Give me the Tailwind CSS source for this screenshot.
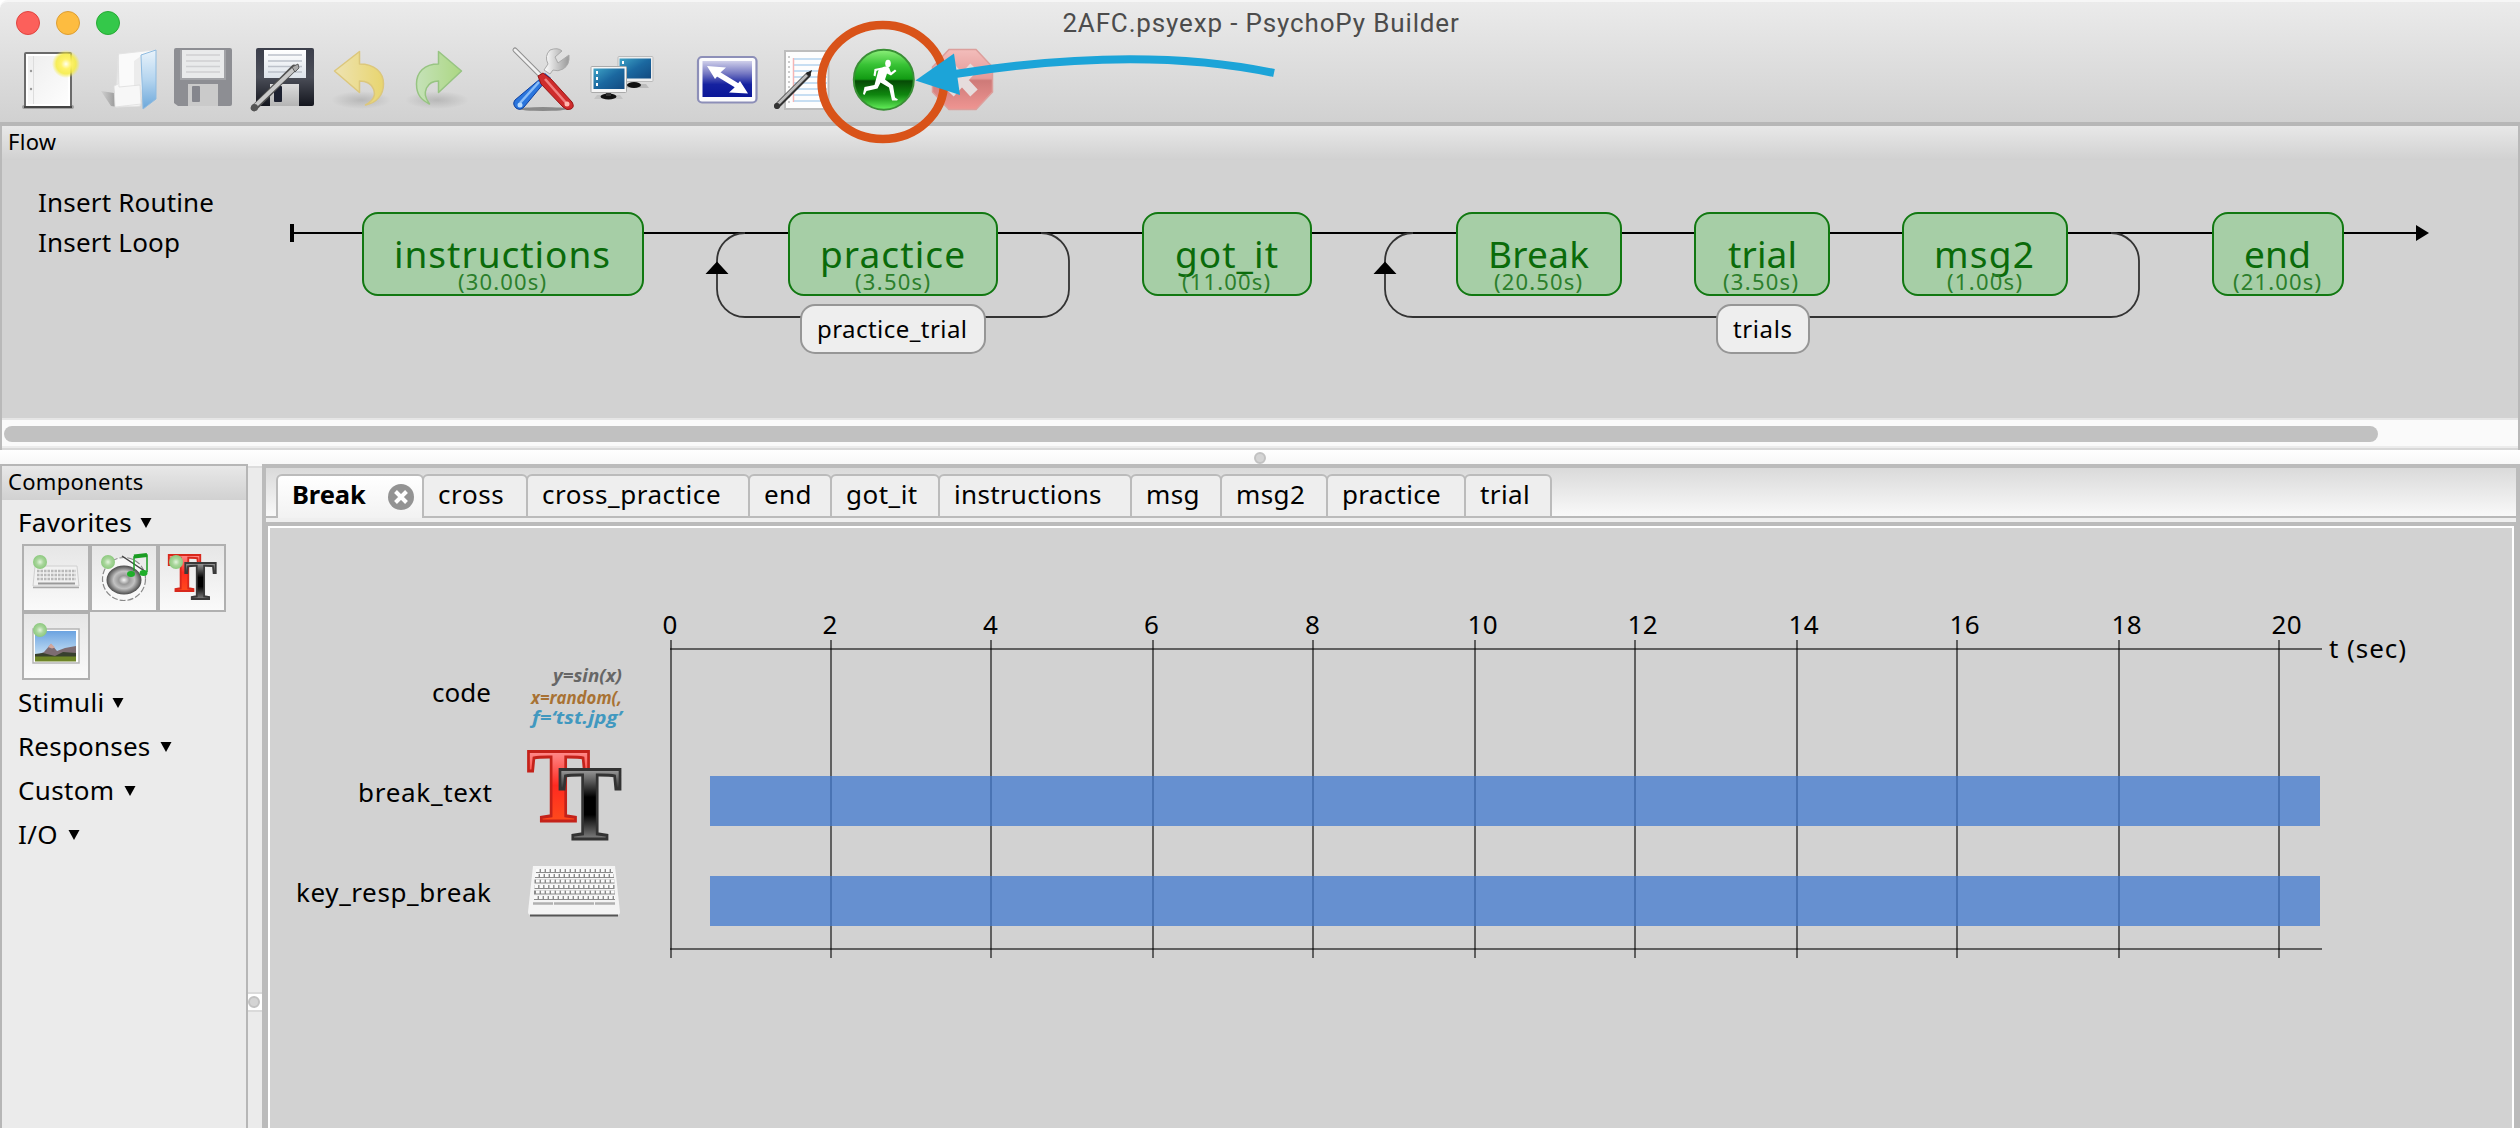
<!DOCTYPE html>
<html lang="en">
<head>
<meta charset="utf-8">
<title>2AFC.psyexp - PsychoPy Builder</title>
<script src="https://cdn.jsdelivr.net/npm/@tailwindcss/browser@4"></script>
</head>
<body class="w-[2520px] h-[1128px] overflow-hidden bg-white">
<div class="relative flex flex-col w-[2520px] h-[1128px] font-['Noto_Sans',sans-serif] text-black">

  <!-- Title bar and toolbar -->
  <header class="h-[126px] shrink-0 flex flex-col rounded-tl-lg border-t-2 border-t-[#f6f6f6] border-b-4 border-b-[#b7b7b7] bg-linear-to-b from-[#ebebeb] to-[#d1d1d1]">
    <div class="h-[42px] flex items-center">
      <div class="w-[300px] pl-4 flex gap-4">
        <span class="size-6 rounded-full bg-[#fc605b] border border-[#e0443f]"></span>
        <span class="size-6 rounded-full bg-[#fdbc40] border border-[#dd9e33]"></span>
        <span class="size-6 rounded-full bg-[#34c84a] border border-[#27aa35]"></span>
      </div>
      <h1 class="flex-1 pl-[2px] pb-[1px] text-center font-['Roboto',sans-serif] text-[26px] leading-[36px] tracking-[0.85px] text-[#4c4c4c]">2AFC.psyexp - PsychoPy Builder</h1>
      <div class="w-[300px]"></div>
    </div>
    <div class="flex h-[72px] pl-5">
      <!-- New -->
      <svg class="w-[70px] h-[72px]" viewBox="20 44 70 72">
        <defs>
          <radialGradient id="sun"><stop offset="0" stop-color="#fffff0"/><stop offset=".35" stop-color="#fff36b"/><stop offset=".7" stop-color="#f6ec40" stop-opacity=".85"/><stop offset="1" stop-color="#f6ec40" stop-opacity="0"/></radialGradient>
          <linearGradient id="page" x1="0" y1="0" x2="1" y2="1"><stop offset="0" stop-color="#eee"/><stop offset="1" stop-color="#fdfdfd"/></linearGradient>
        </defs>
        <rect x="22" y="105" width="52" height="4" rx="2" fill="#000" opacity=".25"/>
        <rect x="25" y="53" width="46" height="54" rx="1" fill="#fff" stroke="#6a6a6a" stroke-width="2"/>
        <rect x="28" y="56" width="40" height="48" fill="url(#page)"/>
        <path d="M33.500 56v48" stroke="#ddd" stroke-width="1"/>
        <circle cx="31" cy="71" r="1.200" fill="#999"/><circle cx="31" cy="89" r="1.200" fill="#999"/>
        <path d="M24 107h48" stroke="#444" stroke-width="2"/>
        <circle cx="66" cy="64" r="14" fill="url(#sun)"/>
      </svg>
      <!-- Open -->
      <svg class="w-[75px] h-[72px]" viewBox="90 44 75 72">
        <defs>
          <linearGradient id="fold" x1="0" y1="0" x2="0" y2="1"><stop offset="0" stop-color="#e9f3fb"/><stop offset=".5" stop-color="#b5d5ef"/><stop offset="1" stop-color="#6ba7da"/></linearGradient>
          <linearGradient id="fsh" x1="0" x2="1"><stop offset="0" stop-color="#888" stop-opacity=".1"/><stop offset="1" stop-color="#777" stop-opacity=".75"/></linearGradient>
        </defs>
        <path d="M101 91l13 2v-5l4 19-7-1z" fill="url(#fsh)"/>
        <path d="M118 54l36-4-12 40-2 16-24 1z" fill="#fafafa" stroke="#e4e4e4"/>
        <path d="M134 61l7-5v40l-7-5z" fill="#ececec"/>
        <path d="M114 86l4-2v-30l1 33 21-2 1 19-26 3z" fill="#f7f7f7" stroke="#ddd" stroke-width=".8"/>
        <path d="M141 55l15-5v49l-13 10z" fill="url(#fold)" stroke="#8fbbe0"/>
      </svg>
      <!-- Save -->
      <svg class="w-[77px] h-[72px]" viewBox="165 44 77 72">
        <defs><linearGradient id="lab" x1="0" y1="0" x2="0" y2="1"><stop offset="0" stop-color="#fff"/><stop offset="1" stop-color="#dde3ea"/></linearGradient>
        <linearGradient id="shut" x1="0" y1="0" x2="0" y2="1"><stop offset="0" stop-color="#dcdcdc"/><stop offset="1" stop-color="#b4b4b4"/></linearGradient></defs>
        <path d="M176 48h54q2 0 2 2v54q0 2-2 2h-52l-4-3V50q0-2 2-2z" fill="#8d8e93"/>
        <path d="M180 50v30h46V50" fill="#a2a3a7"/>
        <rect x="182" y="50" width="42" height="28" fill="#e9eaeb"/>
        <path d="M186 55h34M186 61h34M186 66.500h34M186 72h34" stroke="#cfd0d2" stroke-width="1.500"/>
        <rect x="188" y="84" width="30" height="22" fill="#cacaca"/>
        <rect x="192" y="86" width="8" height="16" rx="1" fill="#85868d"/>
      </svg>
      <!-- Save as -->
      <svg class="w-[83px] h-[72px]" viewBox="242 44 83 72">
        <defs><linearGradient id="dk" x1="0" y1="0" x2="0" y2="1"><stop offset="0" stop-color="#3b3e4a"/><stop offset=".5" stop-color="#4b4e58"/><stop offset="1" stop-color="#14161e"/></linearGradient></defs>
        <path d="M258 48h54q2 0 2 2v54q0 2-2 2h-53l-3-3V50q0-2 2-2z" fill="url(#dk)"/>
        <rect x="264" y="50" width="42" height="28" fill="url(#lab)"/>
        <path d="M268 55h34M268 61h34M268 66.500h34M268 72h34" stroke="#bcc1ca" stroke-width="1.500"/>
        <rect x="270" y="84" width="29" height="22" fill="url(#shut)"/>
        <rect x="274" y="86" width="8" height="16" rx="1" fill="#1d2130"/>
        <path d="M254 108L294 68" stroke="#4f4f4f" stroke-width="6.500" stroke-linecap="round"/>
        <path d="M255 106L296 67" stroke="#c9c9c9" stroke-width="4"/>
        <path d="M292 67l6-3 1 4-4 4z" fill="#aaa" stroke="#444" stroke-width=".8"/>
        <circle cx="254.500" cy="107.500" r="3.500" fill="#555"/>
      </svg>
      <!-- Undo -->
      <svg class="w-[75px] h-[72px]" viewBox="325 44 75 72">
        <defs><linearGradient id="un" x1="0" x2="1"><stop offset="0" stop-color="#eee3b2"/><stop offset="1" stop-color="#e8d56f"/></linearGradient>
        <radialGradient id="sh"><stop offset="0" stop-color="#000" stop-opacity=".14"/><stop offset="1" stop-color="#000" stop-opacity="0"/></radialGradient></defs>
        <ellipse cx="361" cy="100" rx="30" ry="9" fill="url(#sh)"/>
        <path d="M334.500 71L359.500 51.500V64c15 0 24 8 24 20 0 11-7 19-18 21 9-5 10-11 8-16-2-5-6-8-14-8v11.500z" fill="url(#un)" stroke="#dcc77c" stroke-width="1.500" stroke-linejoin="round"/>
      </svg>
      <!-- Redo -->
      <svg class="w-[90px] h-[72px]" viewBox="400 44 90 72">
        <defs><linearGradient id="re" x1="0" x2="1"><stop offset="0" stop-color="#c5e2b8"/><stop offset="1" stop-color="#acd783"/></linearGradient></defs>
        <ellipse cx="437" cy="100" rx="32" ry="9" fill="url(#sh)"/>
        <path d="M461.500 71L438.500 51.500V64c-14 0-22 8-22 20 0 11 5 16 13 20-5-7-5-11-3-16 2-4 6-7 12-7v11.500z" fill="url(#re)" stroke="#97c482" stroke-width="1.500" stroke-linejoin="round"/>
      </svg>
      <!-- Preferences -->
      <svg class="w-[92px] h-[72px]" viewBox="490 44 92 72">
        <defs><linearGradient id="st" x1="0" x2="1"><stop offset="0" stop-color="#fff"/><stop offset="1" stop-color="#999"/></linearGradient></defs>
        <ellipse cx="543" cy="109" rx="24" ry="2" fill="#000" opacity=".35"/>
        <path d="M550 50q8-3 12 1l-7 6 3 6 11-8q1 10-6 14-5 3-10 1l-3 4-6-4 4-6q-4-8 2-14z" fill="url(#st)" stroke="#aaa"/>
        <path d="M545 73l6 5-5 4-7-4z" fill="#1a56c2"/>
        <path d="M540 79l4 4-20 24q-4 4-8 1-4-4-1-8z" fill="#2a75dd" stroke="#0c3f9f"/>
        <path d="M539 82L520 103" stroke="#8abdf7" stroke-width="2.500"/><circle cx="520" cy="105" r="2.500" fill="#b8dcff"/>
        <path d="M515 50L542 77" stroke="#8f8f8f" stroke-width="5" stroke-linecap="round"/>
        <path d="M515 50L542 77" stroke="#f0f0f0" stroke-width="3" stroke-linecap="round"/>
        <path d="M538 76l5-3 8 6 21 23q3 5-1 7-4 2-8-2L541 84z" fill="#cf2c2c" stroke="#961414"/>
        <path d="M545 79L567 104" stroke="#f08080" stroke-width="2.500"/><circle cx="567" cy="104" r="2.500" fill="#ffb9b0"/>
      </svg>
      <!-- Monitor center -->
      <svg class="w-[98px] h-[72px]" viewBox="582 44 98 72">
        <defs><linearGradient id="scr" x1="0" y1="0" x2="1" y2="1"><stop offset="0" stop-color="#3fa3c6"/><stop offset=".5" stop-color="#1b68a0"/><stop offset="1" stop-color="#134a80"/></linearGradient></defs>
        <path d="M624 84h22l3 4h-28z" fill="#bbb"/><ellipse cx="634" cy="85" rx="7" ry="3" fill="#111"/>
        <rect x="618" y="56.500" width="35" height="25" rx="1" fill="#eee" stroke="#bbb"/>
        <rect x="619.500" y="58.500" width="31.500" height="20" fill="url(#scr)"/>
        <path d="M623 61v3M623 67v3" stroke="#fff" stroke-width="2"/>
        <path d="M597 95h23l3 4h-29z" fill="#c4c4c4"/><ellipse cx="608.500" cy="96.500" rx="8" ry="3" fill="#111"/>
        <path d="M606 90h5v6h-5z" fill="#333"/>
        <rect x="591" y="66.500" width="35.500" height="26" rx="1" fill="#f5f5f5" stroke="#aaa"/>
        <rect x="593.500" y="68.500" width="31" height="20.500" fill="url(#scr)"/>
        <path d="M597 71v3M597 77v3M597 83v3" stroke="#fff" stroke-width="2"/>
      </svg>
      <!-- Units / screen -->
      <svg class="w-[88px] h-[72px]" viewBox="680 44 88 72">
        <defs><linearGradient id="bl" x1="0" y1="0" x2="0" y2="1"><stop offset="0" stop-color="#cfcfea"/><stop offset=".35" stop-color="#7477c2"/><stop offset=".65" stop-color="#1522a0"/><stop offset="1" stop-color="#0a1698"/></linearGradient></defs>
        <rect x="698" y="57" width="58.500" height="45.500" rx="4" fill="#fbfbfd" stroke="#8d8fb8" stroke-width="2.200"/>
        <rect x="702.500" y="61" width="49.500" height="36" fill="url(#bl)"/>
        <path d="M714 71.500L741 88" stroke="#fff" stroke-width="5.500"/>
        <path d="M707 66l19 1.500-5 4.500-6 7zM748 93.500l-19-1 5-4.500 6-7z" fill="#fff"/>
      </svg>
      <!-- Compile script -->
      <svg class="w-[77px] h-[72px]" viewBox="768 44 77 72">
        <rect x="785" y="51" width="43.500" height="58" fill="#fdfdfd" stroke="#bdbdbd" stroke-width="2"/>
        <path d="M793.500 58v44" stroke="#f5b5b5" stroke-width="1.500"/>
        <path d="M794 59h33M794 65h33M794 71h33M794 77h33M794 83h33M794 89h33M794 95h33M794 101h33" stroke="#b5d3ee" stroke-width="1.600"/>
        <path d="M789 56v50" stroke="#ccc" stroke-width="2" stroke-dasharray="2 3"/>
        <path d="M777 106L808 75" stroke="#333" stroke-width="5.500" stroke-linecap="round"/>
        <path d="M778 104L807 75" stroke="#bbb" stroke-width="2.800"/>
        <path d="M806 73l6-3-2 6z" fill="#222"/><circle cx="777" cy="106" r="3" fill="#333"/>
      </svg>
      <!-- Run -->
      <svg class="w-[80px] h-[72px]" viewBox="845 44 80 72">
        <defs><linearGradient id="gr" x1="0" y1="0" x2="0" y2="1"><stop offset="0" stop-color="#8df07a"/><stop offset=".25" stop-color="#38c335"/><stop offset=".49" stop-color="#129b13"/><stop offset=".52" stop-color="#064a06"/><stop offset=".75" stop-color="#0f860f"/><stop offset="1" stop-color="#66f25c"/></linearGradient></defs>
        <circle cx="883.800" cy="79.700" r="30" fill="url(#gr)" stroke="#3a8f36" stroke-width="2"/>
        <ellipse cx="888" cy="63.500" rx="2.800" ry="3.800" fill="#fff"/>
        <path d="M882 67.500q4-2 7 0l2 5 4-3 1.500 1.500-5.500 4.500-4-2-2 6 8 6 2 12 3 2-1 1h-5l-3-13-8.500-5-3 6-11 2.500-2 4-1.500-1 1.500-7 10-2 4-15-2 1-1 5.500-2-1 1-6.500z" fill="#fff"/>
      </svg>
      <!-- Stop -->
      <svg class="w-[80px] h-[72px]" viewBox="925 44 80 72">
        <defs><linearGradient id="rd" x1="0" y1="0" x2="0" y2="1"><stop offset="0" stop-color="#f3bdbb"/><stop offset=".48" stop-color="#e59a98"/><stop offset=".52" stop-color="#ce7a78"/><stop offset="1" stop-color="#ef9592"/></linearGradient></defs>
        <path d="M949 49.500h27l16.500 17.500v25L976 109.500h-27L932.500 92V67z" fill="url(#rd)" stroke="#dc9f9c" stroke-width="1.500"/>
        <path d="M950 67l24 26M974 67l-24 26" stroke="#e6dcdc" stroke-width="10"/>
      </svg>
    </div>
  </header>

  <!-- Flow panel -->
  <section class="h-[324px] shrink-0 flex flex-col border-x-2 border-[#b9b9b9] bg-[#d2d2d2]">
    <h2 class="h-[34px] pl-[6px] pb-[3px] text-[22px] leading-[31px] tracking-[0.3px] bg-linear-to-b from-[#e8e8e8] to-[#d1d1d1]">Flow</h2>
    <svg class="h-[258px] w-[2516px] block" viewBox="2 160 2516 258" font-family="'Noto Sans',sans-serif">
      <g font-size="26" fill="#000">
        <text x="38" y="212" textLength="176">Insert Routine</text>
        <text x="38" y="252" textLength="142">Insert Loop</text>
      </g>
      <path d="M292 224v18" stroke="#000" stroke-width="4"/>
      <path d="M292 233H2418" stroke="#000" stroke-width="2"/>
      <path d="M2416 225l13 8-13 8z"/>
      <g fill="none" stroke="#333" stroke-width="1.800">
        <path d="M745 233a28 28 0 0 0-28 28v28a28 28 0 0 0 28 28h296a28 28 0 0 0 28-28v-28a28 28 0 0 0-28-28"/>
        <path d="M1413 233a28 28 0 0 0-28 28v28a28 28 0 0 0 28 28h698a28 28 0 0 0 28-28v-28a28 28 0 0 0-28-28"/>
      </g>
      <path d="M717 261.500l11.500 12.500h-23zM1385 261.500l11.500 12.500h-23z"/>
      <g fill="#a6cea6" stroke="#117811" stroke-width="2">
        <rect x="363" y="213" width="280" height="82" rx="15"/>
        <rect x="789" y="213" width="208" height="82" rx="15"/>
        <rect x="1143" y="213" width="168" height="82" rx="15"/>
        <rect x="1457" y="213" width="164" height="82" rx="15"/>
        <rect x="1695" y="213" width="134" height="82" rx="15"/>
        <rect x="1903" y="213" width="164" height="82" rx="15"/>
        <rect x="2213" y="213" width="130" height="82" rx="15"/>
      </g>
      <g font-size="37" fill="#0a6b0a">
        <text x="394" y="267.500" textLength="216">instructions</text>
        <text x="820" y="267.500" textLength="145">practice</text>
        <text x="1175" y="267.500" textLength="103">got_it</text>
        <text x="1488" y="267.500" textLength="101">Break</text>
        <text x="1728" y="267.500" textLength="69">trial</text>
        <text x="1934" y="267.500" textLength="100">msg2</text>
        <text x="2244" y="267.500" textLength="67">end</text>
      </g>
      <g font-size="22" fill="#2c7f2c">
        <text x="458" y="290" textLength="88">(30.00s)</text>
        <text x="855" y="290" textLength="75">(3.50s)</text>
        <text x="1182" y="290" textLength="88">(11.00s)</text>
        <text x="1494" y="290" textLength="88">(20.50s)</text>
        <text x="1723" y="290" textLength="75">(3.50s)</text>
        <text x="1947" y="290" textLength="75">(1.00s)</text>
        <text x="2233" y="290" textLength="88">(21.00s)</text>
      </g>
      <g fill="#eee" stroke="#969696" stroke-width="2">
        <rect x="801" y="305" width="184" height="48" rx="14"/>
        <rect x="1717" y="305" width="92" height="48" rx="14"/>
      </g>
      <g font-size="24" fill="#000">
        <text x="817" y="338" textLength="150">practice_trial</text>
        <text x="1733" y="338" textLength="59">trials</text>
      </g>
    </svg>
    <div class="h-[30px] border-t-2 border-t-[#e6e6e6] border-b-2 border-b-[#ececec] bg-[#fafafa] pt-[6px] pl-[2px]">
      <div class="w-[2374px] h-4 rounded-full bg-[#c1c1c1]"></div>
    </div>
    <div class="h-[2px] bg-[#d8d8d8]"></div>
  </section>

  <!-- Horizontal sash -->
  <div class="h-[14px] shrink-0 flex items-end justify-center bg-linear-to-b from-white to-[#f8f8f8]">
    <span class="size-3 rounded-full bg-[#d4d4d4] border-2 border-[#c2c2c2]"></span>
  </div>

  <div class="flex h-[664px] shrink-0">
    <!-- Components panel -->
    <aside class="w-[248px] shrink-0 border-x-2 border-t-2 border-[#b6b6b6] bg-[#ebebeb]">
      <h2 class="h-[34px] pl-[6px] pb-[3px] text-[22px] leading-[31px] tracking-[0.3px] bg-linear-to-b from-[#e8e8e8] to-[#d1d1d1]">Components</h2>
      <h3 class="h-11 pl-4 flex items-center gap-[9px] text-[26px] leading-[44px]"><span class="w-[113px] tracking-[0.35px]">Favorites</span><svg class="w-3 h-[10px] mt-[2px]" viewBox="0 0 12 10"><path d="M.5 0h11L6 10z"/></svg></h3>
      <div class="pl-5 flex flex-wrap">
        <div class="size-[68px] border-2 border-[#b0b0b0] bg-linear-to-b from-[#e6e6e6] to-[#fafafa]">
          <svg class="size-16" viewBox="24 546 64 64">
            <defs><radialGradient id="gb"><stop offset="0" stop-color="#e3f4dd"/><stop offset=".5" stop-color="#a9d69c"/><stop offset="1" stop-color="#8cc97e"/></radialGradient></defs>
            <path d="M35 566h42l2 20H33z" fill="#f1f1f1" stroke="#d0d0d0"/>
            <path d="M37 571h39M37 575h39M37 579h39" stroke="#b9b9b9" stroke-width="2.400" stroke-dasharray="2.500 1"/>
            <path d="M38 583.500h37" stroke="#999" stroke-width="2"/>
            <path d="M33 587.500h46" stroke="#aaa" stroke-width="1.500"/>
            <circle cx="40" cy="562" r="7" fill="url(#gb)"/>
          </svg>
        </div>
        <div class="size-[68px] border-2 border-[#b0b0b0] bg-linear-to-b from-[#e6e6e6] to-[#fafafa]">
          <svg class="size-16" viewBox="92 546 64 64">
            <defs><radialGradient id="sp"><stop offset="0" stop-color="#f4f4f4"/><stop offset=".3" stop-color="#999"/><stop offset=".6" stop-color="#c2c2c2"/><stop offset="1" stop-color="#4b4b4b"/></radialGradient></defs>
            <circle cx="124" cy="579" r="21.500" fill="#f8f8f8" stroke="#8a8a8a" stroke-width="1.200" stroke-dasharray="6 2"/>
            <ellipse cx="124" cy="580" rx="17.500" ry="14.500" fill="url(#sp)"/>
            <path d="M122 556l24 16" stroke="#444" stroke-width="1.500"/>
            <path d="M134 571V557l13-2v17" fill="none" stroke="#1a9c22" stroke-width="1.500"/><path d="M134 556.500l13-1.500" stroke="#1a9c22" stroke-width="4"/>
            <ellipse cx="131" cy="574" rx="4" ry="3" fill="#1fae2a"/><ellipse cx="143.500" cy="573" rx="4" ry="3" fill="#1fae2a"/>
            <circle cx="108" cy="562" r="7" fill="url(#gb)"/>
          </svg>
        </div>
        <div class="size-[68px] border-2 border-[#b0b0b0] bg-linear-to-b from-[#e6e6e6] to-[#fafafa]">
          <svg class="size-16 overflow-visible" viewBox="160 546 64 64" font-family="'Liberation Serif',serif" font-weight="700">
            <text x="168" y="590.500" font-size="54" textLength="33" lengthAdjust="spacingAndGlyphs" fill="url(#tr)" stroke="#d8281c" stroke-width="2">T</text>
            <text x="184.500" y="598.500" font-size="54" textLength="32" lengthAdjust="spacingAndGlyphs" fill="url(#tb)" stroke="#3a3a3a" stroke-width="2">T</text>
            <circle cx="176" cy="562" r="7" fill="url(#gb)"/>
          </svg>
        </div>
        <div class="size-[68px] border-2 border-[#b0b0b0] bg-linear-to-b from-[#e6e6e6] to-[#fafafa]">
          <svg class="size-16" viewBox="24 614 64 64">
            <defs><linearGradient id="sky" x1="0" y1="0" x2="0" y2="1"><stop offset="0" stop-color="#6ba3e0"/><stop offset="1" stop-color="#cbe4f6"/></linearGradient></defs>
            <rect x="33" y="629" width="46" height="34" fill="#fff" stroke="#b5b5b5" stroke-width="1.500"/>
            <rect x="35" y="631" width="41" height="26" fill="url(#sky)"/>
            <path d="M35 656l9-4 7-8 6 7 8-3 11-2v11H35z" fill="#7d6c72"/>
            <path d="M48 647l3-3.500 4 4-3 1z" fill="#d2a79d"/>
            <path d="M35 654l8-1 12 3 8-4 13 1v6H35z" fill="#38402e"/>
            <rect x="35" y="656.500" width="41" height="5" fill="#6e8527"/>
            <circle cx="40" cy="630" r="7" fill="url(#gb)"/>
          </svg>
        </div>
      </div>
      <h3 class="h-11 pl-4 flex items-center gap-[9px] text-[26px] leading-[44px]"><span class="w-[85px] tracking-[0.35px]">Stimuli</span><svg class="w-3 h-[10px] mt-[2px]" viewBox="0 0 12 10"><path d="M.5 0h11L6 10z"/></svg></h3>
      <h3 class="h-11 pl-4 flex items-center gap-[9px] text-[26px] leading-[44px]"><span class="w-[133px] tracking-[0.2px]">Responses</span><svg class="w-3 h-[10px] mt-[2px]" viewBox="0 0 12 10"><path d="M.5 0h11L6 10z"/></svg></h3>
      <h3 class="h-11 pl-4 flex items-center gap-[9px] text-[26px] leading-[44px]"><span class="w-[97px] tracking-[0.35px]">Custom</span><svg class="w-3 h-[10px] mt-[2px]" viewBox="0 0 12 10"><path d="M.5 0h11L6 10z"/></svg></h3>
      <h3 class="h-11 pl-4 flex items-center gap-[9px] text-[26px] leading-[44px]"><span class="w-[41px] tracking-[0.35px]">I/O</span><svg class="w-3 h-[10px] mt-[2px]" viewBox="0 0 12 10"><path d="M.5 0h11L6 10z"/></svg></h3>
    </aside>

    <!-- Vertical sash -->
    <div class="w-[14px] shrink-0 flex flex-col bg-[#ebebeb]">
      <div class="h-1 bg-[#f9f9f9] border-b-2 border-[#dcdcdc]"></div>
      <div class="h-[524px]"></div>
      <div class="h-5 flex items-center border-y-2 border-[#dadada] bg-white"><span class="size-3 rounded-full bg-[#d4d4d4] border-2 border-[#c2c2c2]"></span></div>
    </div>

    <!-- Routines notebook -->
    <main class="flex-1 flex flex-col bg-[#bbb] pt-1">
      <div class="h-[54px] mr-1 ml-1 flex flex-col bg-[#efefef]">
        <nav class="h-[50px] pt-[6px] pl-[10px] flex items-stretch bg-linear-to-b from-[#dadada] to-[#fafafa] shadow-[inset_0_-2px_0_#b9b9b9] text-[26px] leading-[37px]">
          <div class="w-[148px] -mr-[2px] flex rounded-t-md border-2 border-b-0 border-[#bbb] bg-linear-to-b from-white to-[#f2f2f2] pl-[14px] font-bold">
            <span class="w-[96px] text-[25.5px] -tracking-[0.1px]">Break</span>
            <svg class="size-[26px] mt-2" viewBox="0 0 26 26"><circle cx="13" cy="13" r="13" fill="#939393"/><path d="M7.500 7.500l11 11M18.500 7.500l-11 11" stroke="#fff" stroke-width="4"/></svg>
          </div>
          <div class="w-[106px] -mr-[2px] rounded-t-md border-2 border-[#bbb] bg-[#eee] pl-[14px] tracking-[0.6px]">cross</div>
          <div class="w-[224px] -mr-[2px] rounded-t-md border-2 border-[#bbb] bg-[#eee] pl-[14px] tracking-[0.55px]">cross_practice</div>
          <div class="w-[84px] -mr-[2px] rounded-t-md border-2 border-[#bbb] bg-[#eee] pl-[14px] tracking-[0.4px]">end</div>
          <div class="w-[110px] -mr-[2px] rounded-t-md border-2 border-[#bbb] bg-[#eee] pl-[14px] tracking-[0.5px]">got_it</div>
          <div class="w-[194px] -mr-[2px] rounded-t-md border-2 border-[#bbb] bg-[#eee] pl-[14px] tracking-[0.3px]">instructions</div>
          <div class="w-[92px] -mr-[2px] rounded-t-md border-2 border-[#bbb] bg-[#eee] pl-[14px] tracking-[0.4px]">msg</div>
          <div class="w-[108px] -mr-[2px] rounded-t-md border-2 border-[#bbb] bg-[#eee] pl-[14px] tracking-[0.4px]">msg2</div>
          <div class="w-[140px] -mr-[2px] rounded-t-md border-2 border-[#bbb] bg-[#eee] pl-[14px] tracking-[0.3px]">practice</div>
          <div class="w-[88px] rounded-t-md border-2 border-[#bbb] bg-[#eee] pl-[14px] tracking-[0.4px]">trial</div>
        </nav>
      </div>
      <div class="flex-1 mt-1 ml-[6px] mr-[6px] border-2 border-b-0 border-white bg-[#d2d2d2]">
        <svg class="block w-[2242px] h-[600px]" viewBox="270 528 2242 600" font-family="'Noto Sans',sans-serif" font-size="26">
          <defs>
            <linearGradient id="tr" x1="0" y1="0" x2="0" y2="1"><stop offset=".2" stop-color="#ff8f8f"/><stop offset=".5" stop-color="#ff2a20"/><stop offset=".8" stop-color="#ff4a1c"/></linearGradient>
            <linearGradient id="tb" x1="0" y1="0" x2="0" y2="1"><stop offset=".22" stop-color="#999"/><stop offset=".45" stop-color="#000"/><stop offset=".6" stop-color="#000"/><stop offset=".82" stop-color="#888"/></linearGradient>
          </defs>
          <g text-anchor="middle">
            <text x="670" y="634">0</text><text x="830" y="634">2</text><text x="990.500" y="634">4</text><text x="1151.500" y="634">6</text><text x="1312.500" y="634">8</text>
            <text x="1482.500" y="634" textLength="30">10</text><text x="1642.500" y="634" textLength="30">12</text><text x="1803.500" y="634" textLength="30">14</text><text x="1964.500" y="634" textLength="30">16</text><text x="2126.500" y="634" textLength="30">18</text><text x="2286.500" y="634" textLength="30">20</text>
          </g>
          <text x="2329" y="658" textLength="77">t (sec)</text>
          <text x="432" y="702" textLength="59">code</text>
          <text x="358" y="802" textLength="134">break_text</text>
          <text x="296" y="902" textLength="195">key_resp_break</text>
          <g font-size="18.500" font-weight="700" font-style="italic" font-family="'Open Sans',sans-serif">
            <text x="553" y="682" textLength="69" lengthAdjust="spacingAndGlyphs" fill="#666">y=sin(x)</text>
            <text x="531" y="704" textLength="91" lengthAdjust="spacingAndGlyphs" fill="#a87234">x=random(,</text>
            <text x="532" y="724" textLength="90" lengthAdjust="spacingAndGlyphs" fill="#4198bf">f=‘tst.jpg’</text>
          </g>
          <g font-family="'Liberation Serif',serif" font-weight="700" font-size="105">
            <text x="527" y="821" textLength="63" lengthAdjust="spacingAndGlyphs" fill="url(#tr)" stroke="#c4221a" stroke-width="3">T</text>
            <text x="558.500" y="838.500" textLength="63" lengthAdjust="spacingAndGlyphs" fill="url(#tb)" stroke="#333" stroke-width="3">T</text>
          </g>
          <path d="M533 866h82l5 46q0 3-3 3h-86q-3 0-3-3z" fill="#f4f4f4"/>
          <path d="M530 915.500h88" stroke="#555" stroke-width="2"/>
          <path d="M536 871h77M535 876h79M534.500 881.500h80M534.500 887h80M534 892.500h81M534 898h81" stroke="#8a8a8a" stroke-width="3.800"/>
          <path d="M536 870.500h77M535 875.500h79M536 881h79M534.500 886.500h80M536 892h79M534 897.500h81" stroke="#fbfbfb" stroke-width="2.800" stroke-dasharray="3.600 1.400"/>
          <path d="M533 903.500h83" stroke="#b0b0b0" stroke-width="2.500" stroke-dasharray="20 1 40 1"/>
          <g stroke="#000" stroke-opacity=".54" stroke-width="2">
            <path d="M670 649H2322M670 949H2322"/>
            <path d="M671 640V958M831 640V958M991 640V958M1153 640V958M1313 640V958M1475 640V958M1635 640V958M1797 640V958M1957 640V958M2119 640V958M2279 640V958"/>
          </g>
          <path d="M710 776H2320v50H710zM710 876H2320v50H710z" fill="#4279cf" fill-opacity=".75"/>
        </svg>
      </div>
    </main>
  </div>

  <!-- Callout around the run button -->
  <svg class="absolute left-[810px] top-[10px] w-[480px] h-[140px]" viewBox="810 10 480 140">
    <ellipse cx="882.800" cy="82" rx="61.300" ry="57" fill="none" stroke="#d95319" stroke-width="8.500"/>
    <path d="M955 74Q1140 45 1274 73" fill="none" stroke="#1ca4d8" stroke-width="8.200"/>
    <path d="M915.500 80.500L954 53.500 960 95z" fill="#1ca4d8"/>
  </svg>
</div>
</body>
</html>
